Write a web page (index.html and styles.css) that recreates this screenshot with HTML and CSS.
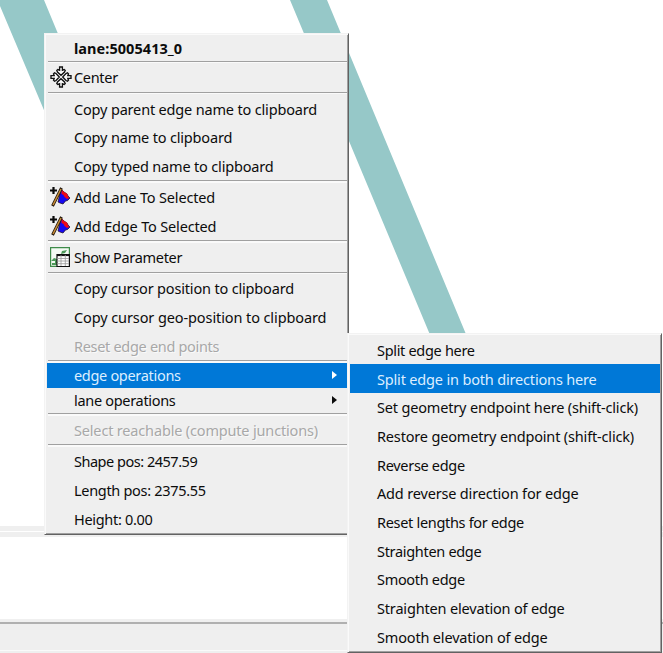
FILE: index.html
```html
<!DOCTYPE html>
<html lang="en">
<head>
<meta charset="utf-8">
<title>Lane menu</title>
<link rel="stylesheet" href="styles.css">
</head>
<body>
<svg class="symbols" aria-hidden="true">
  <symbol id="flag" viewBox="0 0 20 20">
    <path d="M11 2l3 3 3 2 1 2 2 2-2.500 2.500-2 .5-2.500 3-3-1-2-1z" fill="#1608f0" stroke="#180818" stroke-width=".7"/>
    <path d="M11.500 2.500l2.500 2.500 3 1.500 1 3 1.500 1.500-2.500 1-2.500-2-1-2-2-1z" fill="#f00814"/>
    <path d="M11.500 1L2.500 19" stroke="#20150a" stroke-width="3"/>
    <path d="M11 2L3 18" stroke="#c98b35" stroke-width="1.500"/>
    <path d="M3.500 0v7M0 3.500h7" stroke="#080808" stroke-width="2.200"/>
  </symbol>
  <symbol id="inward" viewBox="0 0 22 22">
    <path d="M9.600 1h2.800v3.200l1.800-.7 1 1L14.500 6 11 9.300 7.500 6 6.800 4.500l1-1 1.800.7z" fill="#fff" stroke="#111" stroke-width="1.350"/>
  </symbol>
</svg>
<main class="desktop">
  <svg class="map" viewBox="0 0 663 526" aria-hidden="true">
    <path d="M0 0H44L132 212H87L0 6ZM290 0H327L510 440H474Z" fill="#96c8c8"/>
  </svg>
  <div class="splitter"></div>
  <div class="messages"></div>
  <div class="status"></div>

  <nav class="menu lane-menu">
    <div class="item title"><span>lane:5005413_0</span></div>
    <hr>
    <div class="item tight"><svg class="icon center-icon" viewBox="0 0 22 22"><use href="#inward" width="22" height="22"/><use href="#inward" width="22" height="22" transform="rotate(90 11 11)"/><use href="#inward" width="22" height="22" transform="rotate(180 11 11)"/><use href="#inward" width="22" height="22" transform="rotate(270 11 11)"/></svg><span>Center</span></div>
    <hr>
    <div class="item"><span>Copy parent edge name to clipboard</span></div>
    <div class="item"><span>Copy name to clipboard</span></div>
    <div class="item"><span>Copy typed name to clipboard</span></div>
    <hr>
    <div class="item"><svg class="icon"><use href="#flag"/></svg><span>Add Lane To Selected</span></div>
    <div class="item"><svg class="icon"><use href="#flag"/></svg><span>Add Edge To Selected</span></div>
    <hr>
    <div class="item tight"><svg class="icon" viewBox="0 0 20 20"><path d="M.6.600h18.800v18.800H.6z" fill="#f4faf4" stroke="#3e8b49" stroke-width="1.200"/><path d="M1 14l3-3 3 1 1-4 3-1 1-3 5-1-2 3-4 1-2 3v8H2v-2h3v-2z" fill="#4c9959"/><path d="M7 7.500h12.400v12H7z" fill="#fff" stroke="#111" stroke-width="1.200"/><path d="M7 8.200h12.400" stroke="#111" stroke-width="1.800"/><path d="M7 11.500h12M7 14h12M7 16.700h12M11 8v11M15.300 8v11" stroke="#999" stroke-width=".8"/></svg><span>Show Parameter</span></div>
    <hr>
    <div class="item"><span>Copy cursor position to clipboard</span></div>
    <div class="item wide"><span>Copy cursor geo-position to clipboard</span></div>
    <div class="item disabled tight"><span>Reset edge end points</span></div>
    <hr>
    <div class="item cascade selected tight"><span>edge operations</span><i class="arrow"></i></div>
    <div class="item cascade tight"><span>lane operations</span><i class="arrow"></i></div>
    <hr>
    <div class="item disabled"><span>Select reachable (compute junctions)</span></div>
    <hr>
    <div class="item numeric"><span>Shape pos: 2457.59</span></div>
    <div class="item tight"><span>Length pos: 2375.55</span></div>
    <div class="item tight"><span>Height: 0.00</span></div>
  </nav>

  <nav class="menu edge-menu">
    <div class="item tight"><span>Split edge here</span></div>
    <div class="item selected"><span>Split edge in both directions here</span></div>
    <div class="item"><span>Set geometry endpoint here (shift-click)</span></div>
    <div class="item"><span>Restore geometry endpoint (shift-click)</span></div>
    <div class="item tight"><span>Reverse edge</span></div>
    <div class="item"><span>Add reverse direction for edge</span></div>
    <div class="item tight"><span>Reset lengths for edge</span></div>
    <div class="item tight"><span>Straighten edge</span></div>
    <div class="item tight"><span>Smooth edge</span></div>
    <div class="item"><span>Straighten elevation of edge</span></div>
    <div class="item"><span>Smooth elevation of edge</span></div>
  </nav>
</main>
</body>
</html>
```
FILE: styles.css
```css
* { box-sizing: border-box; }
body { margin: 0; overflow: hidden; background: #fff; }
.symbols { position: absolute; width: 0; height: 0; }
.desktop {
  position: relative;
  display: flex;
  flex-direction: column;
  width: 663px;
  height: 653px;
  overflow: hidden;
  font: 14.5px/20px "Noto Sans", "Open Sans", sans-serif;
  color: #0c0c0c;
}
.map { display: block; width: 663px; height: 526px; flex: none; }
.splitter { height: 11px; background: linear-gradient(#efefef 5px, #fff 5px 6px, #efefef 6px); }
.messages { height: 82px; }
.status { height: 34px; background: linear-gradient(#f0f0f0 3px, #b0b0b0 3px 5px, #efefef 5px 31px, #fafafa 31px 32px, #efefef 32px); }

.menu {
  position: absolute;
  background: #efefef;
  border: 1px solid #f3f3f3;
  border-right: 1px solid #626262;
  border-bottom: 1px solid #626262;
  box-shadow: inset 1px 1px #fafafa, inset -1px -1px #a0a0a0;
}
.lane-menu { left: 44px; top: 33px; width: 305px; height: 502px; padding: 1px 1px 1px 2px; }
.edge-menu { left: 347px; top: 333px; width: 315px; height: 320px; padding: 1.500px 1px 1px 2px; }

.item {
  display: flex;
  align-items: center;
  height: 28.72px;
  padding-left: 27px;
  white-space: pre;
  letter-spacing: -.17px;
}
.edge-menu .item { height: 28.68px; }
.item.tight { letter-spacing: -.31px; }
.item.wide { letter-spacing: -.1px; }
.item.numeric { letter-spacing: -.48px; }
.title { height: 25.500px; font-weight: 700; letter-spacing: .05px; }
.item.cascade { height: 25.200px; }
.disabled { color: #a8a8a8; text-shadow: 1px 1px #fafafa; }
.selected { color: #dceeff; background: #0078d7; }
.icon { width: 20px; height: 20px; margin: 0 4px 0 -24px; flex: none; }
.center-icon { width: 22px; height: 22px; margin-right: 2px; }
.arrow {
  margin: 0 10px 0 auto;
  border: 4.500px solid transparent;
  border-left: 5px solid currentColor;
  border-right: 0;
}
.selected .arrow { color: #fff; }
hr {
  height: 2.500px;
  margin: 0 0 0 1px;
  border: 0;
  border-top: 1px solid #a0a0a0;
  background: #fafafa;
}
```
